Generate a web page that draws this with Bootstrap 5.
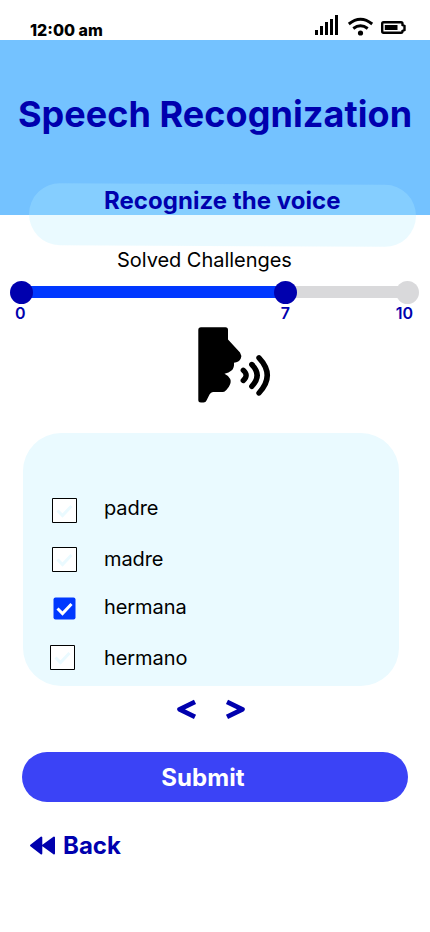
<!DOCTYPE html>
<html lang="en">
<head>
<meta charset="utf-8">
<meta name="viewport" content="width=device-width, initial-scale=1">
<title>Speech Recognization</title>
<link href="https://cdn.jsdelivr.net/npm/bootstrap@5.3.0/dist/css/bootstrap.min.css" rel="stylesheet">
<style>
  body { font-family: Inter, "Liberation Sans", sans-serif; color: #000; }
  .screen { width: 430px; height: 932px; }
  .navy { color: #0000ae; }
  .status-bar { height: 40px; padding: 20px 24px 0 30px; font-size: 16px; line-height: 20px; }
  .clock { font-weight: 800; }
  .status-icons { margin-top: -6px; }
  .hero { height: 175px; background: #74c2ff; padding-top: 52px; }
  .hero h1 { font-size: 36px; line-height: 44px; letter-spacing: .06px; }
  .prompt-pill { width: 387px; height: 62px; margin: -31px 0 0 29px; border-radius: 31px;
    background: rgba(180, 237, 255, .28); transform: rotate(.3deg); }
  .prompt-text { font-size: 24px; line-height: 30px; margin-top: -60px; padding-left: 104px; letter-spacing: .04px; }
  .solved { font-size: 20px; line-height: 24px; margin-top: 32px; padding-left: 117px; letter-spacing: -.04px; }
  .slider { height: 23px; margin: 9px 11px 0 10px; }
  .knob { width: 23px; height: 23px; background: #0000ae; }
  .knob-end { background: #d9d9db; }
  .track { height: 12px; margin: 0 -4px 1px; }
  .track-done { width: 249px; background: #0038ff; }
  .track-left { background: #d9d9db; }
  .ticks { height: 20px; font-size: 16px; line-height: 20px; margin-top: -1px; padding: 0 17px 0 15px; font-weight: 600; }
  .tick-end { width: 123px; }
  .voice { margin: 4px 0 0 198px; }
  .choices { width: 376px; height: 253px; margin: 29px 0 0 23px; padding: 60px 0 0 27px; border-radius: 38px; background: #eafaff; }
  .choice { height: 49px; font-size: 20px; line-height: 24px; }
  .choice svg { flex: none; }
  .choice-text { letter-spacing: -.08px; padding-top: 4px; }
  .choice:first-child .choice-text { padding-top: 3px; }
  .choice:nth-child(2) .choice-text { padding-top: 5px; }
  .choice:last-child .choice-text { padding-top: 6px; }
  .pager { height: 22px; margin: 12px 0 0 176px; gap: 28px; }
  .submit { width: 386px; height: 50px; margin: 32px 0 0 22px; padding: 2px 24px 0 0; background: #3b43f6; font-size: 24px; letter-spacing: .08px; }
  .submit:hover { background: #3b43f6; }
  .back { margin: 29px 0 0 29px; font-size: 24px; line-height: 30px; gap: 7px; }
</style>
</head>
<body>
<main class="screen bg-white overflow-hidden">
  <header class="status-bar d-flex justify-content-between">
    <span class="clock">12:00 am</span>
    <svg class="status-icons" width="92" height="24" viewBox="0 0 92 24" fill="none" stroke="#000">
      <path d="M1 21V16H4V21ZM6 21V12H9V21ZM11 21V8H14V21ZM16 21V5H19V21ZM21 21V1H24V21Z" fill="#000" stroke="none"/>
      <path d="M34.800 10Q46.500 .500 58.200 10M39.300 14.500Q46.500 9 53.700 14.500" stroke-width="2.900"/>
      <circle cx="46.500" cy="19" r="2.600" fill="#000" stroke="none"/>
      <path d="M69.500 8.200H87Q88.500 8.200 88.500 9.700V11L90.500 12V16L88.500 17Q88.500 18.700 87 18.700H69.500Q68.200 18.700 68.200 17.300V9.500Q68.200 8.200 69.500 8.200Z" stroke-width="2.400"/>
      <path d="M70.800 11H83.500V16H70.800Z" fill="#000" stroke="none"/>
    </svg>
  </header>
  <section class="hero navy text-center">
    <h1 class="fw-bold text-nowrap mb-0">Speech Recognization</h1>
  </section>
  <div class="prompt-pill"></div>
  <h2 class="prompt-text navy fw-bold mb-0 position-relative">Recognize the voice</h2>
  <div class="solved">Solved Challenges</div>
  <div class="slider d-flex align-items-center">
    <span class="knob rounded-circle position-relative"></span>
    <span class="track track-done"></span>
    <span class="knob rounded-circle position-relative"></span>
    <span class="track track-left flex-grow-1"></span>
    <span class="knob knob-end rounded-circle"></span>
  </div>
  <div class="ticks navy d-flex">
    <span>0</span><span class="ms-auto">7</span><span class="tick-end text-end">10</span>
  </div>
  <svg class="voice d-block" width="75" height="77" viewBox="0 0 75 77" fill="none" stroke="#000" stroke-width="5.400" stroke-linecap="round">
    <path d="M3 .300H27.500Q30 .300 30 3V12.500L42 25.500Q44 28.500 42.800 31.500Q41 35.300 36 35.700Q36.500 41 33.500 43.500Q31 45.800 26.500 46.700Q30.500 48.500 32.200 52C34 56 30.500 61 27.500 63.800Q26.500 65 24.500 65H15Q12.800 65 11.500 67.500L8.500 73.500Q7.800 75.500 5.500 75.500H3Q.300 75.500 .300 73V3Q.300 .300 3 .300Z" fill="#000" stroke="none"/>
    <path d="M45.300 43.300Q51 48.300 45.300 53.500M53.800 37.500Q64.500 48.300 53.800 59.300M61 30.800Q77.500 48.300 61 66"/>
  </svg>
  <section class="choices">
    <label class="choice d-flex">
      <svg width="54" height="40" viewBox="0 0 54 40"><path d="M2.500 5.500H26.500V29.500H2.500Z" fill="#fff" stroke="#000"/><path d="M7.500 17.500L12.500 22.500L21.500 13" fill="none" stroke="#eafaff" stroke-width="3"/></svg>
      <span class="choice-text">padre</span>
    </label>
    <label class="choice d-flex">
      <svg width="54" height="40" viewBox="0 0 54 40"><path d="M2.500 5.500H26.500V29.500H2.500Z" fill="#fff" stroke="#000"/><path d="M7.500 17.500L12.500 22.500L21.500 13" fill="none" stroke="#eafaff" stroke-width="3"/></svg>
      <span class="choice-text">madre</span>
    </label>
    <label class="choice d-flex">
      <svg width="54" height="40" viewBox="0 0 54 40"><rect x="3.500" y="6.500" width="22" height="22" rx="2" fill="#0038ff"/><path d="M7.500 17.500L12.500 22.500L21.500 13" fill="none" stroke="#fff" stroke-width="3"/></svg>
      <span class="choice-text">hermana</span>
    </label>
    <label class="choice d-flex">
      <svg width="54" height="40" viewBox="0 0 54 40"><path d="M.500 5.500H24.500V29.500H.500Z" fill="#fff" stroke="#000"/><path d="M5.500 17.500L10.500 22.500L19.500 13" fill="none" stroke="#eafaff" stroke-width="3"/></svg>
      <span class="choice-text">hermano</span>
    </label>
  </section>
  <nav class="pager d-flex navy" aria-label="Challenges">
    <svg width="21" height="22" viewBox="0 0 21 22" fill="none" stroke="currentColor" stroke-width="4.800" stroke-linejoin="round"><path d="M19 3.800L3.600 11.300L19 18.800"/></svg>
    <svg width="21" height="22" viewBox="0 0 21 22" fill="none" stroke="currentColor" stroke-width="4.800" stroke-linejoin="round"><path d="M2 3.800L17.400 11.300L2 18.800"/></svg>
  </nav>
  <button class="submit btn d-block border-0 rounded-pill text-white fw-bold" type="button">Submit</button>
  <a class="back d-flex align-items-center navy fw-bold text-decoration-none" href="#">
    <svg width="27" height="20" viewBox="0 0 27 20" fill="currentColor" stroke="currentColor" stroke-width="2" stroke-linejoin="round"><path d="M12.300 1.500V17.500L2 9.500ZM25 1.500V17.500L14 9.500Z"/></svg>
    <span>Back</span>
  </a>
</main>
<script src="https://cdn.jsdelivr.net/npm/bootstrap@5.3.0/dist/js/bootstrap.bundle.min.js"></script>
</body>
</html>
